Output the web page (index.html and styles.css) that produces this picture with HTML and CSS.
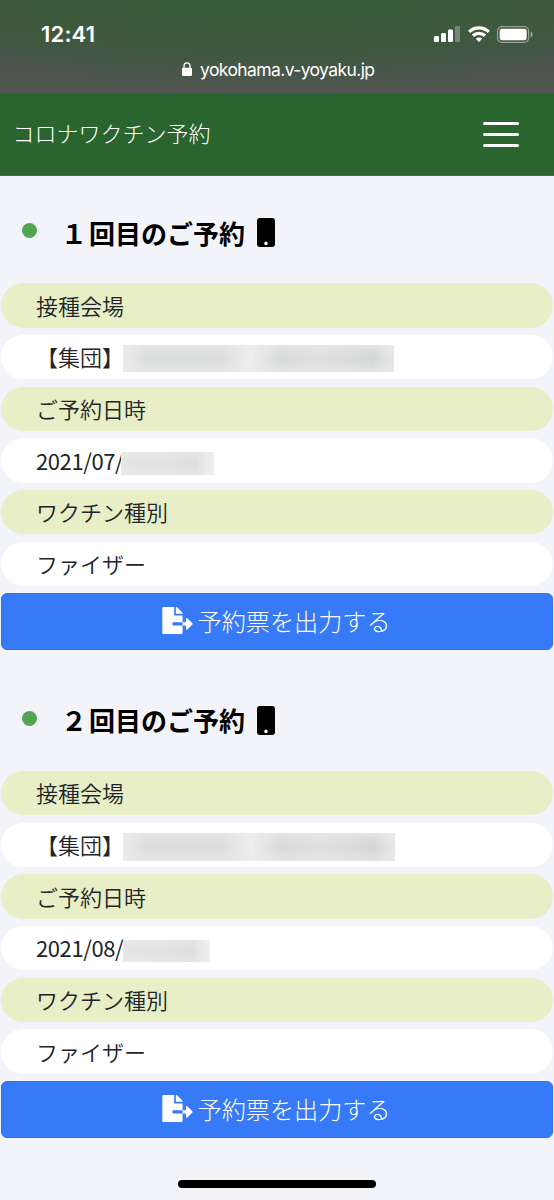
FILE: index.html
```html
<!DOCTYPE html>
<html lang="ja">
<head>
<meta charset="utf-8">
<title>コロナワクチン予約</title>
<link rel="stylesheet" href="styles.css">
</head>
<body>
<svg class="defs" width="0" height="0" aria-hidden="true">
  <symbol id="phone" viewBox="0 0 320 512" preserveAspectRatio="none"><path fill-rule="evenodd" d="M272 0H48C21.500 0 0 21.500 0 48v416c0 26.500 21.500 48 48 48h224c26.500 0 48-21.500 48-48V48c0-26.500-21.500-48-48-48zM160 480a32 32 0 1 1 0-64 32 32 0 0 1 0 64z"/></symbol>
  <symbol id="export" viewBox="0 0 576 512"><path d="M384 121.900c0-6.300-2.500-12.400-7-16.900L279.100 7c-4.500-4.500-10.600-7-17-7H256v128h128zM571 308l-95.700-96.400c-10.100-10.100-27.400-3-27.400 11.300V288h-64v64h64v65.200c0 14.300 17.300 21.400 27.400 11.300L571 332c6.600-6.600 6.600-17.400 0-24zm-379 28v-32c0-8.800 7.200-16 16-16h176V160H248c-13.200 0-24-10.800-24-24V0H24C10.700 0 0 10.700 0 24v464c0 13.300 10.700 24 24 24h336c13.300 0 24-10.700 24-24V352H208c-8.800 0-16-7.200-16-16z"/></symbol>
</svg>
<div class="browser-bar">
  <div class="status">
    <span class="clock">12:41</span>
    <div class="indicators">
      <svg class="signal" width="26" height="16" viewBox="0 0 26 16" fill="#fff"><rect x="0" y="10" width="5" height="6" rx="1.300"/><rect x="7" y="7" width="5" height="9" rx="1.300"/><rect x="14" y="3.500" width="5" height="12.500" rx="1.300"/><rect x="21" y="0" width="5" height="16" rx="1.300" opacity=".28"/></svg>
      <svg class="wifi" width="22" height="16" viewBox="0 0 22 16"><g fill="none" stroke="#fff" stroke-width="3.300"><path d="M1.200 5.900a14 14 0 0 1 19.600 0"/><path d="M4.900 9.800a8.700 8.700 0 0 1 12.200 0"/></g><path fill="#fff" d="M11 16l-3.200-3.200a4.600 4.600 0 0 1 6.400 0z"/></svg>
      <svg class="battery" width="36" height="17" viewBox="0 0 36 17"><rect x=".6" y=".6" width="31" height="15.800" rx="4.300" fill="none" stroke="#fff" stroke-opacity=".45" stroke-width="1.200"/><rect x="2.700" y="2.700" width="27" height="11.500" rx="2.300" fill="#fff"/><path d="M33.700 5.500c2.400 1 2.400 5 0 6z" fill="#fff" opacity=".5"/></svg>
    </div>
  </div>
  <div class="address">
    <svg width="10" height="14" viewBox="0 0 10 14"><rect y="5.800" width="10" height="8.200" rx="1.300" fill="#fff"/><path d="M2 6.500V4a3 3.200 0 0 1 6 0v2.500" fill="none" stroke="#fff" stroke-width="1.300"/></svg>
    <span class="url">yokohama.v-yoyaku.jp</span>
  </div>
</div>
<header class="site-header">
  <span class="site-title">コロナワクチン予約</span>
  <div class="menu"><i></i><i></i><i></i></div>
</header>
<main>
  <section class="booking">
    <h2 class="heading"><span class="dot"></span><span class="heading-text"><span class="count">１</span>回目のご予約</span><svg class="phone"><use href="#phone"/></svg></h2>
    <div class="rows">
      <div class="row label">接種会場</div>
      <div class="row">【集団】<span class="mask venue"></span></div>
      <div class="row label">ご予約日時</div>
      <div class="row"><span class="date">2021/07/</span><span class="mask day"></span></div>
      <div class="row label">ワクチン種別</div>
      <div class="row">ファイザー</div>
      <div class="button"><svg class="export"><use href="#export"/></svg><span>予約票を出力する</span></div>
    </div>
  </section>
  <section class="booking">
    <h2 class="heading"><span class="dot"></span><span class="heading-text"><span class="count">２</span>回目のご予約</span><svg class="phone"><use href="#phone"/></svg></h2>
    <div class="rows">
      <div class="row label">接種会場</div>
      <div class="row">【集団】<span class="mask venue second"></span></div>
      <div class="row label">ご予約日時</div>
      <div class="row"><span class="date">2021/08/</span><span class="mask day second"></span></div>
      <div class="row label">ワクチン種別</div>
      <div class="row">ファイザー</div>
      <div class="button"><svg class="export"><use href="#export"/></svg><span>予約票を出力する</span></div>
    </div>
  </section>
</main>
<div class="home-indicator"></div>
</body>
</html>
```
FILE: styles.css
```css
* { box-sizing: border-box; }
body {
  margin: 0;
  width: 554px;
  height: 1200px;
  overflow: hidden;
  position: relative;
  background: #f3f4f9;
  color: #212529;
  font-family: "Noto Sans CJK JP", sans-serif;
  font-weight: 350;
}
.defs { position: absolute; }
svg { display: block; flex: none; }
.browser-bar {
  height: 93px;
  padding-top: 20px;
  color: #fff;
  font-family: Inter, sans-serif;
  background: radial-gradient(ellipse 360px 90px at 50% 0, #345c34 0%, #345c3400 100%), linear-gradient(#3d5a3d 0, #475648 55%, #525451 100%);
}
.status {
  display: flex;
  justify-content: space-between;
  align-items: center;
  height: 28px;
  padding: 0 21px 0 41px;
}
.clock { font-size: 22px; font-weight: 600; letter-spacing: 0.2px; }
.indicators { display: flex; align-items: center; }
.wifi { margin-left: 7.500px; }
.battery { margin-left: 7.500px; }
.address {
  display: flex;
  align-items: center;
  height: 42px;
  padding-left: 182px;
  gap: 8px;
  font-size: 17.500px;
  font-weight: 400;
  letter-spacing: -0.600px;
}
.site-header {
  display: flex;
  align-items: center;
  justify-content: space-between;
  height: 83px;
  padding: 0 35px 0 12.500px;
  background: #2a642f;
  border-bottom: 1px solid #3f7143;
  color: #fff;
  font-size: 22px;
  font-weight: 300;
}
.site-title { padding-bottom: 4px; }
.menu { display: grid; gap: 8px; width: 36px; }
.menu i { height: 3px; border-radius: 2px; background: #fff; }
.booking { height: 487.600px; padding-top: 35px; }
.heading {
  display: flex;
  align-items: center;
  height: 44px;
  margin: 0 0 28.300px;
  padding-left: 22px;
  color: #000;
  font-size: 26px;
  font-weight: 700;
}
.dot { width: 15px; height: 15px; margin-bottom: 5px; border-radius: 50%; background: #52a552; }
.heading-text { margin-left: 24px; line-height: 42px; padding-bottom: 1px; }
.count { margin-right: 2px; }
.phone { width: 18px; height: 29px; margin: 0 0 1px 12px; }
.rows { display: flex; flex-direction: column; gap: 7.400px; padding: 0 1px; }
.row {
  display: flex;
  align-items: center;
  height: 44.300px;
  padding: 0 0 1.500px 35px;
  border-radius: 23px;
  background: #fff;
  font-size: 22px;
  line-height: 42px;
}
.label { background: #e8eec6; }
.date { letter-spacing: -0.400px; font-weight: 400; width: 85px; white-space: nowrap; }
.mask { flex: none; height: 27px; margin-top: 5px; }
.venue {
  width: 271px;
  margin-left: -1px;
  background: linear-gradient(#ebebeb99, #ebebeb00 45%, #ebebeb00 55%, #ebebeb99), linear-gradient(90deg, #ececec 0, #dcdedd 8%, #dcdddd 36%, #eee 47%, #d8dada 58%, #e0e0e0 73%, #d4d7d6 92%, #e7e7e7 100%);
}
.venue.second { width: 272px; height: 28px; margin-top: 6px; }
.day {
  width: 93px;
  height: 23px;
  margin-top: 7.500px;
  background: linear-gradient(#ececec88, #ececec00 50%, #ececec88), linear-gradient(90deg, #e5e5e5, #e2e2e2 45%, #dcdddd 80%, #f2f2f2);
}
.day.second { width: 87px; height: 22px; margin-left: 2px; }
.button {
  display: flex;
  align-items: center;
  height: 56.500px;
  padding: 0 0 2px 159.500px;
  border: 1px solid #2f70fb;
  border-radius: 6px;
  background: #377af7;
  color: #fff;
  fill: #fff;
  font-size: 24.150px;
  font-weight: 300;
}
.export { width: 31px; height: 27px; margin-right: 5px; }
.home-indicator {
  position: absolute;
  left: 178px;
  top: 1180px;
  width: 198px;
  height: 8px;
  border-radius: 4px;
  background: #000;
}
```
